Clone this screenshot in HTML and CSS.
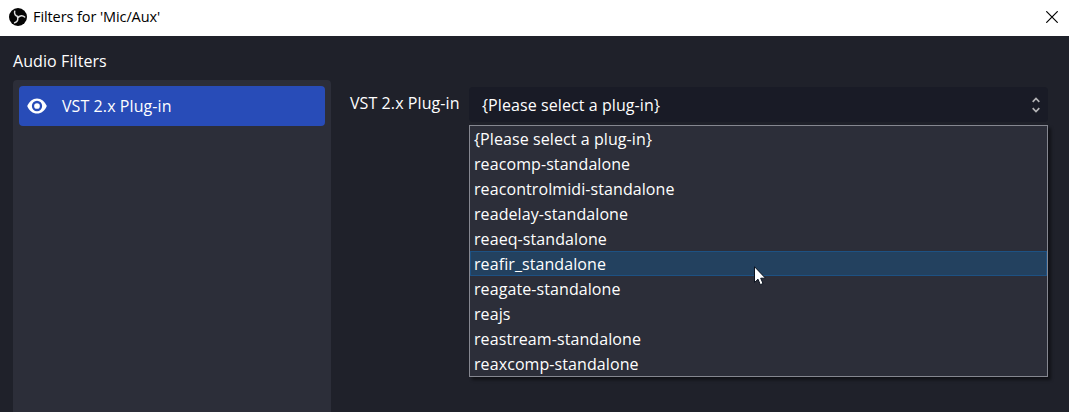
FILE: index.html
```html
<!DOCTYPE html>
<html lang="en">
<head>
<meta charset="utf-8">
<title>Filters for 'Mic/Aux'</title>
<link rel="stylesheet" href="styles.css">
</head>
<body>
<div class="window">
  <header class="titlebar">
    <svg class="logo" width="18" height="18" viewBox="0 0 18 18">
      <circle cx="9" cy="9" r="9" fill="#050505"/>
      <g fill="none" stroke="#dedede" stroke-width="1.500" stroke-linecap="round">
        <path d="M9 8.500C6.600 8 4.900 6 5.700 3.200"/>
        <path d="M9 8.500C6.600 8 4.900 6 5.700 3.200" transform="rotate(120 9 9)"/>
        <path d="M9 8.500C6.600 8 4.900 6 5.700 3.200" transform="rotate(240 9 9)"/>
      </g>
    </svg>
    <span class="title">Filters for 'Mic/Aux'</span>
    <svg class="close" width="12" height="12" viewBox="0 0 12 12"><path d="M.3.3 11.7 11.7M11.7.3.3 11.7" stroke="#000" stroke-width="1.2"/></svg>
  </header>
  <main class="content">
    <section class="sidebar">
      <div class="heading">Audio Filters</div>
      <div class="filters">
        <div class="filter">
          <svg class="eye" width="20" height="16" viewBox="0 0 20 16">
            <path d="M.2 8C2.200 3.300 5.700.4 10 .4S17.800 3.300 19.800 8C17.800 12.700 14.300 15.600 10 15.600S2.200 12.700.2 8Z" fill="#fff"/>
            <circle cx="10" cy="8" r="4" fill="none" stroke="#284cb8" stroke-width="2.300"/>
          </svg>
          <span class="filter-name">VST 2.x Plug-in</span>
        </div>
      </div>
    </section>
    <section class="settings">
      <div class="label">VST 2.x Plug-in</div>
      <div class="field">
        <div class="select">
          <span class="value">{Please select a plug-in}</span>
          <svg width="8" height="16" viewBox="0 0 8 16" fill="none" stroke="#b4b4b6" stroke-width="1.700"><path d="M.7 4.800 4 1.500 7.300 4.800M.7 11.200 4 14.500 7.300 11.200"/></svg>
        </div>
        <div class="options">
          <div class="option">{Please select a plug-in}</div>
          <div class="option">reacomp-standalone</div>
          <div class="option">reacontrolmidi-standalone</div>
          <div class="option">readelay-standalone</div>
          <div class="option">reaeq-standalone</div>
          <div class="option active">reafir_standalone</div>
          <div class="option">reagate-standalone</div>
          <div class="option">reajs</div>
          <div class="option">reastream-standalone</div>
          <div class="option">reaxcomp-standalone</div>
        </div>
      </div>
    </section>
  </main>
  <svg class="cursor" width="12" height="20" viewBox="0 0 12 20"><path d="M.5.7V16.500L4 13.200 6.300 18.700 9 17.500 6.700 12.200H11.500Z" fill="#fff" stroke="#0b1320" stroke-width="1"/></svg>
</div>
</body>
</html>
```
FILE: styles.css
```css
* { box-sizing: border-box; }
body { margin: 0; font-family: "Open Sans", "Noto Sans", sans-serif; font-size: 16px; letter-spacing: .085px; color: #fefefe; }
.window { position: relative; display: flex; flex-direction: column; height: 412px; overflow: hidden; background: #1f212a; }
.titlebar { display: flex; align-items: center; height: 36px; padding: 0 11px 2px 9px; background: #fff; color: #000; }
.logo { margin-right: 6px; }
.title { flex: 1; font-size: 14.5px; line-height: 20px; letter-spacing: -0.09px; white-space: nowrap; }
.content { display: flex; flex: 1; min-height: 0; padding-left: 13px; }
.sidebar { display: flex; flex-direction: column; width: 318px; }
.heading { height: 44px; padding-top: 14px; line-height: 22px; }
.filters { flex: 1; padding: 6px; border-radius: 4px 4px 0 0; background: #2c2e39; }
.filter { display: flex; align-items: center; height: 40px; padding-left: 8px; border-radius: 4px; background: #284cb8; }
.filter-name { margin-left: 15px; line-height: 22px; }
.settings { display: flex; align-items: flex-start; padding: 51px 0 0 19px; }
.label { width: 119px; padding-top: 5px; line-height: 22px; white-space: nowrap; }
.field { width: 579px; }
.select { display: flex; align-items: center; justify-content: space-between; height: 35px; margin-bottom: 3px; padding: 0 8px 0 13px; border-radius: 4px; background: #191b26; }
.value { line-height: 22px; }
.options { border: 1px solid #858790; background: #2c2e39; box-shadow: 3px 3px 3px rgba(0, 0, 0, .45); }
.option { height: 25px; padding: 1px 0 0 4px; line-height: 25px; }
.active { padding: 1px 0 0 3px; border: 1px solid #1d5183; background: #23415f; line-height: 23px; }
.cursor { position: absolute; left: 754px; top: 266px; }
```
